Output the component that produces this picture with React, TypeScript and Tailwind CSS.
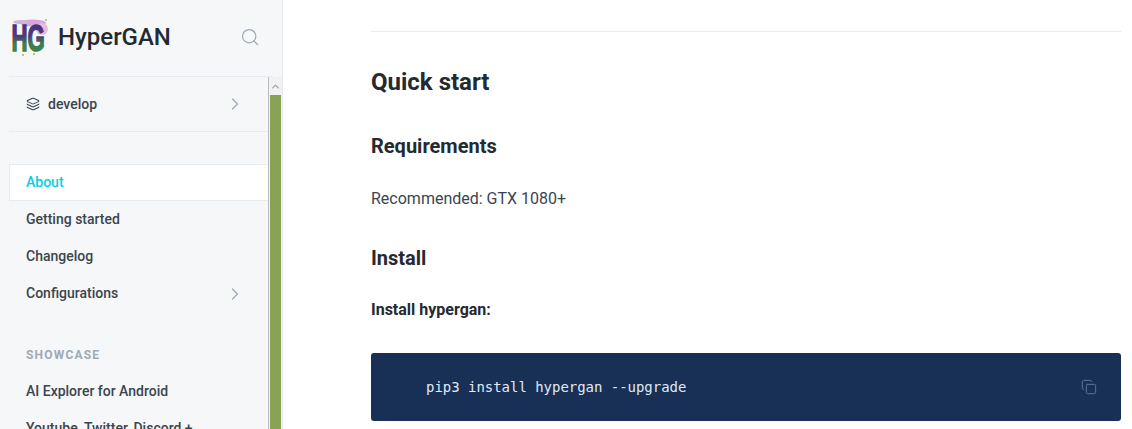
import { ChevronRight, ChevronUp, Copy, Layers, Search } from 'lucide-react';

function Logo() {
  return (
    <svg width="40" height="40" viewBox="0 0 40 40" className="shrink-0">
      <defs>
        <linearGradient id="hg" x1="0" y1="0" x2="0" y2="1">
          <stop offset="0" stopColor="#4d2a80" />
          <stop offset="0.45" stopColor="#4a3a78" />
          <stop offset="0.65" stopColor="#3f7a52" />
          <stop offset="1" stopColor="#3c8a4a" />
        </linearGradient>
      </defs>
      <rect width="40" height="40" rx="3" fill="#f6f7f3" />
      <ellipse cx="24" cy="6" rx="13" ry="3.5" fill="#d9a6dc" />
      <ellipse cx="33" cy="12" rx="6" ry="6" fill="#e8bbdc" />
      <ellipse cx="12" cy="5" rx="8" ry="2" fill="#c9b6e4" />
      <text transform="translate(2.5 34) scale(0.6 1)" fontFamily="'Liberation Sans', sans-serif" fontWeight="700" fontSize="37" fill="url(#hg)" stroke="url(#hg)" strokeWidth="1.6">HG</text>
      <circle cx="14" cy="38" r="1" fill="#8fbf6a" />
      <circle cx="25" cy="37" r="1" fill="#8fbf6a" />
      <circle cx="37" cy="3" r="1" fill="#8fbf6a" />
    </svg>
  );
}

function NavItem({ label, active, arrow }: { label: string; active?: boolean; arrow?: boolean }) {
  return (
    <div
      className={`flex h-[37px] items-center justify-between pr-[23px] text-[14px] font-medium ${
        active ? 'bg-white pl-[16px] text-[#00d1e8] border-y border-l border-[#e6ecf1]' : 'pl-[17px] text-[#3b454e]'
      }`}
    >
      <span>{label}</span>
      {arrow && <ChevronRight size={20} strokeWidth={1.5} className="text-[#9daab6]" />}
    </div>
  );
}

export default function App() {
  return (
    <div className="flex h-[429px] w-[1132px] overflow-hidden bg-white font-['Roboto',sans-serif] text-[#242a31]">
      <aside className="flex w-[283px] shrink-0 flex-col border-r border-[#e6ecf1] bg-[#f5f7f9]">
        <div className="mx-[9px] flex h-[77px] shrink-0 items-center justify-between border-b border-[#e6ecf1] pb-[2px] pr-[13px]">
          <div className="flex items-center gap-[9px]">
            <Logo />
            <span className="text-[24px] font-medium text-[#242a31]">HyperGAN</span>
          </div>
          <Search size={20} strokeWidth={1.5} className="text-[#9daab6]" />
        </div>
        <div className="flex min-h-0 flex-1">
          <div className="min-w-0 flex-1 overflow-hidden pl-[9px]">
            <div className="flex h-[55px] items-center justify-between border-b border-[#e6ecf1] pl-[17px] pr-[23px] text-[14px] font-medium text-[#3b454e]">
              <span className="flex items-center gap-[8px]">
                <Layers size={14} strokeWidth={1.8} />
                develop
              </span>
              <ChevronRight size={20} strokeWidth={1.5} className="text-[#9daab6]" />
            </div>
            <div className="pt-[32px]">
              <NavItem label="About" active />
              <NavItem label="Getting started" />
              <NavItem label="Changelog" />
              <NavItem label="Configurations" arrow />
            </div>
            <div className="pl-[17px] pt-[34px] text-[12px] font-bold tracking-[1.2px] text-[#9daab6]">SHOWCASE</div>
            <div className="pt-[9px]">
              <NavItem label="AI Explorer for Android" />
              <NavItem label="Youtube, Twitter, Discord +" />
            </div>
          </div>
          <div className="flex w-[14px] shrink-0 flex-col border-l border-[#bdbdbd] bg-[#f1f1f1] px-px">
            <div className="flex h-[18px] shrink-0 items-center justify-center">
              <ChevronUp size={11} strokeWidth={3} className="text-[#a3a3a3]" />
            </div>
            <div className="flex-1 bg-[#87a353]" />
          </div>
        </div>
      </aside>
      <main className="min-w-0 flex-1 pl-[88px] pr-[11px]">
        <div className="mt-[31px] border-t border-[#e6ecf1] pt-[34px]">
          <h1 className="text-[24px] font-bold leading-[32px]">Quick start</h1>
          <h2 className="mt-[34px] text-[20px] font-bold leading-[28px]">Requirements</h2>
          <p className="mt-[26px] text-[16px] leading-[26px] text-[#3b454e]">Recommended: GTX 1080+</p>
          <h2 className="mt-[32px] text-[20px] font-bold leading-[28px]">Install</h2>
          <p className="mt-[25px] text-[16px] font-bold leading-[26px]">Install hypergan:</p>
          <div className="mt-[30px] flex h-[68px] items-center justify-between rounded-[3px] bg-[#183055] pl-[55px] pr-[24px]">
            <code className="font-['DejaVu_Sans_Mono',monospace] text-[14px] tracking-[-0.03px] text-[#e0e9f5]">pip3 install hypergan --upgrade</code>
            <Copy size={16} strokeWidth={1.5} className="text-[#5f7594]" />
          </div>
        </div>
      </main>
    </div>
  );
}
